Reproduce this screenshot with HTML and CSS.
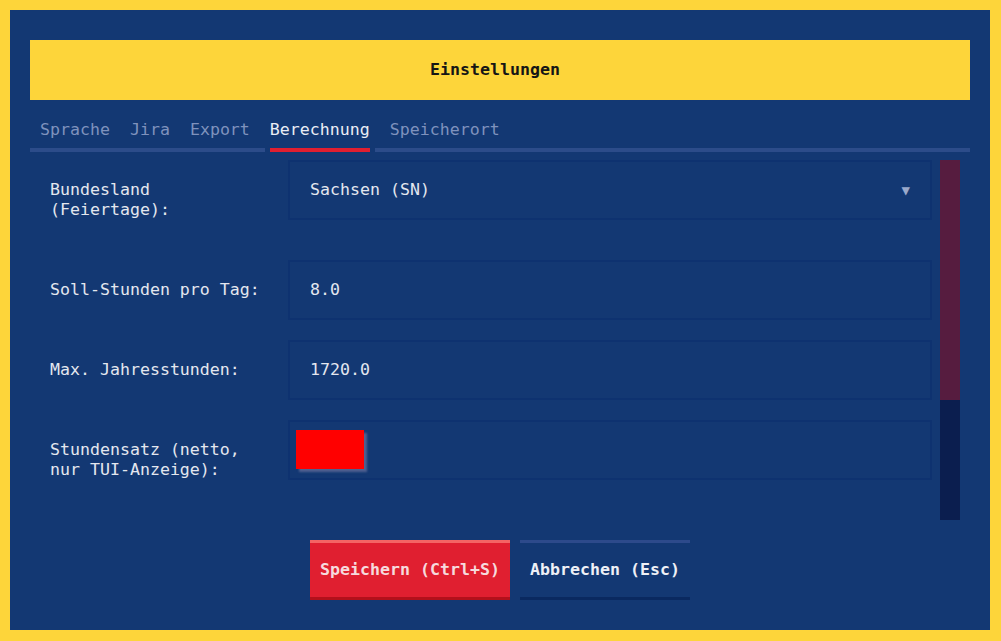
FILE: index.html
```html
<!DOCTYPE html>
<html lang="de">
<head>
    <meta charset="UTF-8">
    <meta name="viewport" content="width=device-width, initial-scale=1.0">
    <title>Einstellungen</title>
    <link rel="stylesheet" href="styles.css">
</head>
<body>
    <div class="dialog">
        <header class="title">Einstellungen</header>

        <nav class="tabs">
            <span class="tab">Sprache</span>
            <span class="tab">Jira</span>
            <span class="tab">Export</span>
            <span class="tab active">Berechnung</span>
            <span class="tab">Speicherort</span>
        </nav>
        <div class="tab-bar">
            <div class="bar-left"></div>
            <div class="bar-active"></div>
            <div class="bar-right"></div>
        </div>

        <div class="content">
            <form class="form">
                <div class="field field-select">
                    <label>Bundesland<br>(Feiertage):</label>
                    <div class="input select">
                        <span>Sachsen (SN)</span>
                        <span class="arrow">▼</span>
                    </div>
                </div>
                <div class="field">
                    <label>Soll-Stunden pro Tag:</label>
                    <div class="input">8.0</div>
                </div>
                <div class="field">
                    <label>Max. Jahresstunden:</label>
                    <div class="input">1720.0</div>
                </div>
                <div class="field">
                    <label>Stundensatz (netto,<br>nur TUI-Anzeige):</label>
                    <div class="input input-empty">
                        <div class="cursor"></div>
                    </div>
                </div>
            </form>
            <div class="scrollbar">
                <div class="thumb"></div>
            </div>
        </div>

        <div class="buttons">
            <button class="btn btn-primary">Speichern (Ctrl+S)</button>
            <button class="btn btn-default">Abbrechen (Esc)</button>
        </div>
    </div>
</body>
</html>
```

FILE: styles.css
```css
body {
    margin: 0;
    padding: 10px 11px 11px 10px;
    background: #fdd53a;
    font-family: 'DejaVu Sans Mono', 'Liberation Mono', monospace;
    font-size: 16.6px;
    line-height: 20px;
    color: #e4e7ef;
}
.dialog {
    width: 940px;
    height: 560px;
    padding: 30px 20px;
    background: #133873;
    display: flex;
    flex-direction: column;
}
.title {
    height: 60px;
    padding-right: 10px;
    background: #fdd53a;
    color: #151515;
    font-weight: bold;
    display: flex;
    align-items: center;
    justify-content: center;
}
.tabs {
    margin-top: 20px;
    padding-left: 10px;
    display: flex;
    gap: 20px;
    padding-bottom: 8px;
}
.tab {
    color: #7f92bd;
}
.tab.active {
    color: #eaedf5;
}
.tab-bar {
    display: flex;
    height: 4px;
    margin-bottom: 8px;
}
.bar-left {
    width: 235px;
    background: #2c4c8a;
}
.bar-active {
    width: 100px;
    margin: 0 5px;
    background: #e01f30;
}
.bar-right {
    flex: 1;
    background: #2c4c8a;
}
.content {
    height: 360px;
    display: flex;
}
.form {
    flex: 1;
    padding-left: 20px;
    display: flex;
    flex-direction: column;
    gap: 20px;
}
.field {
    display: grid;
    grid-template-columns: 238px 1fr;
}
.field-select {
    margin-bottom: 20px;
}
.field label {
    padding-top: 20px;
}
.input {
    height: 20px;
    padding: 18px 20px;
    border: 2px solid #0e3270;
    display: flex;
    justify-content: space-between;
}
.arrow {
    font-size: 14px;
    color: #9aa9cb;
}
.input-empty {
    padding: 8px 6px 4px;
    height: 44px;
}
.cursor {
    width: 68px;
    height: 39px;
    background: #ff0000;
    box-shadow: 3px 3px 2px #4f6090;
}
.scrollbar {
    width: 20px;
    margin: 0 10px 0 8px;
    background: #0b1e4f;
}
.thumb {
    height: 240px;
    background: #561c3f;
}
.buttons {
    margin-top: 20px;
    display: flex;
    justify-content: center;
    gap: 10px;
}
.btn {
    height: 60px;
    padding: 0 10px 1px;
    font-family: inherit;
    font-size: 16.6px;
    font-weight: bold;
    border: none;
    border-top: 3px solid;
    border-bottom: 3px solid;
}
.btn-primary {
    width: 200px;
    background: #e01f30;
    color: #f6dadd;
    border-top-color: #f46464;
    border-bottom-color: #b3101b;
}
.btn-default {
    width: 170px;
    background: #133873;
    color: #eef0f6;
    border-top-color: #2d4a8b;
    border-bottom-color: #0a2960;
}
```
